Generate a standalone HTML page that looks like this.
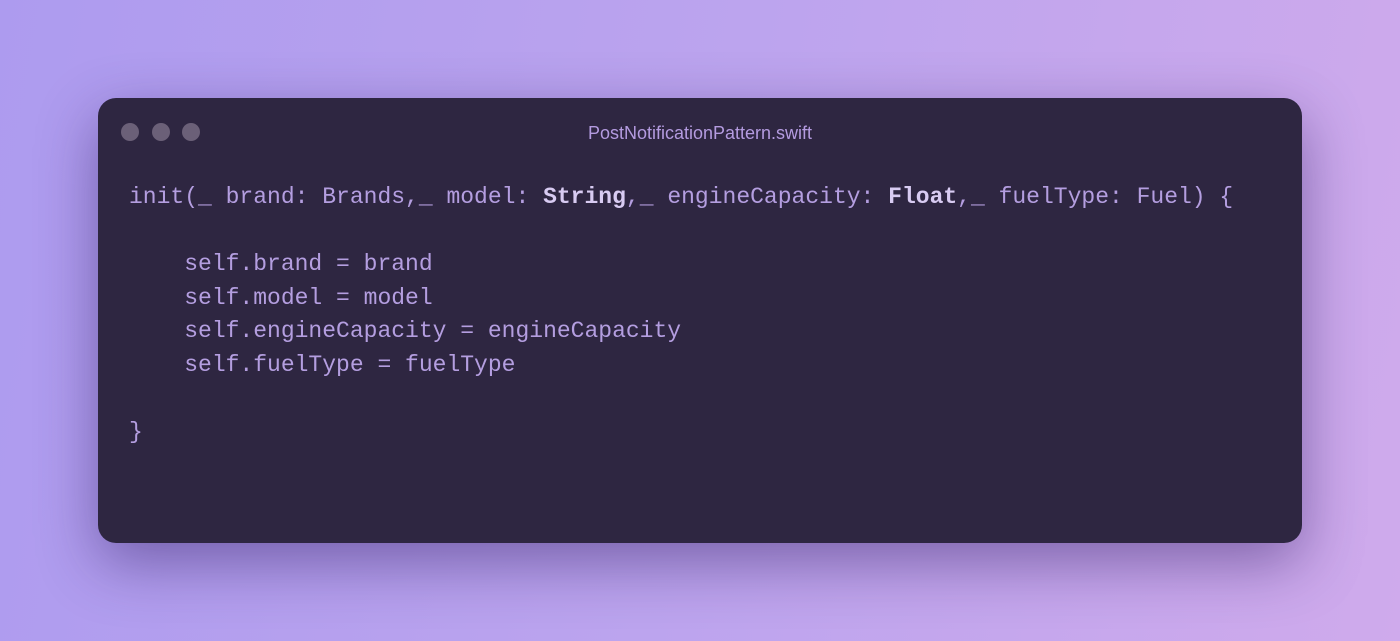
<!DOCTYPE html>
<html><head><style>
html,body{margin:0;width:1400px;height:641px;overflow:hidden}
body{background:linear-gradient(100deg,#ad9bef 0%,#bca4ee 50%,#cfaaec 100%);position:relative;font-family:"Liberation Sans",sans-serif}
.win{position:absolute;left:98px;top:98px;width:1204px;height:445px;background:#2e2641;border-radius:18px;box-shadow:0 20px 60px rgba(40,20,90,0.45)}
.dot{position:absolute;top:25px;width:18px;height:18px;border-radius:50%;background:#6b6078}
.title{position:absolute;top:25px;left:0;width:100%;text-align:center;color:#b49be0;font-size:18px}
pre{position:absolute;left:31px;top:83px;margin:0;font-family:"Liberation Mono",monospace;font-size:23px;line-height:33.5px;color:#b49ee0}
b{color:#d8cbf2}
</style></head><body>
<div class="win">
<div class="dot" style="left:23px"></div><div class="dot" style="left:54px"></div><div class="dot" style="left:84px"></div>
<div class="title">PostNotificationPattern.swift</div>
<pre>init(_ brand: Brands,_ model: <b>String</b>,_ engineCapacity: <b>Float</b>,_ fuelType: Fuel) {

    self.brand = brand
    self.model = model
    self.engineCapacity = engineCapacity
    self.fuelType = fuelType

}</pre>
</div>
</body></html>
